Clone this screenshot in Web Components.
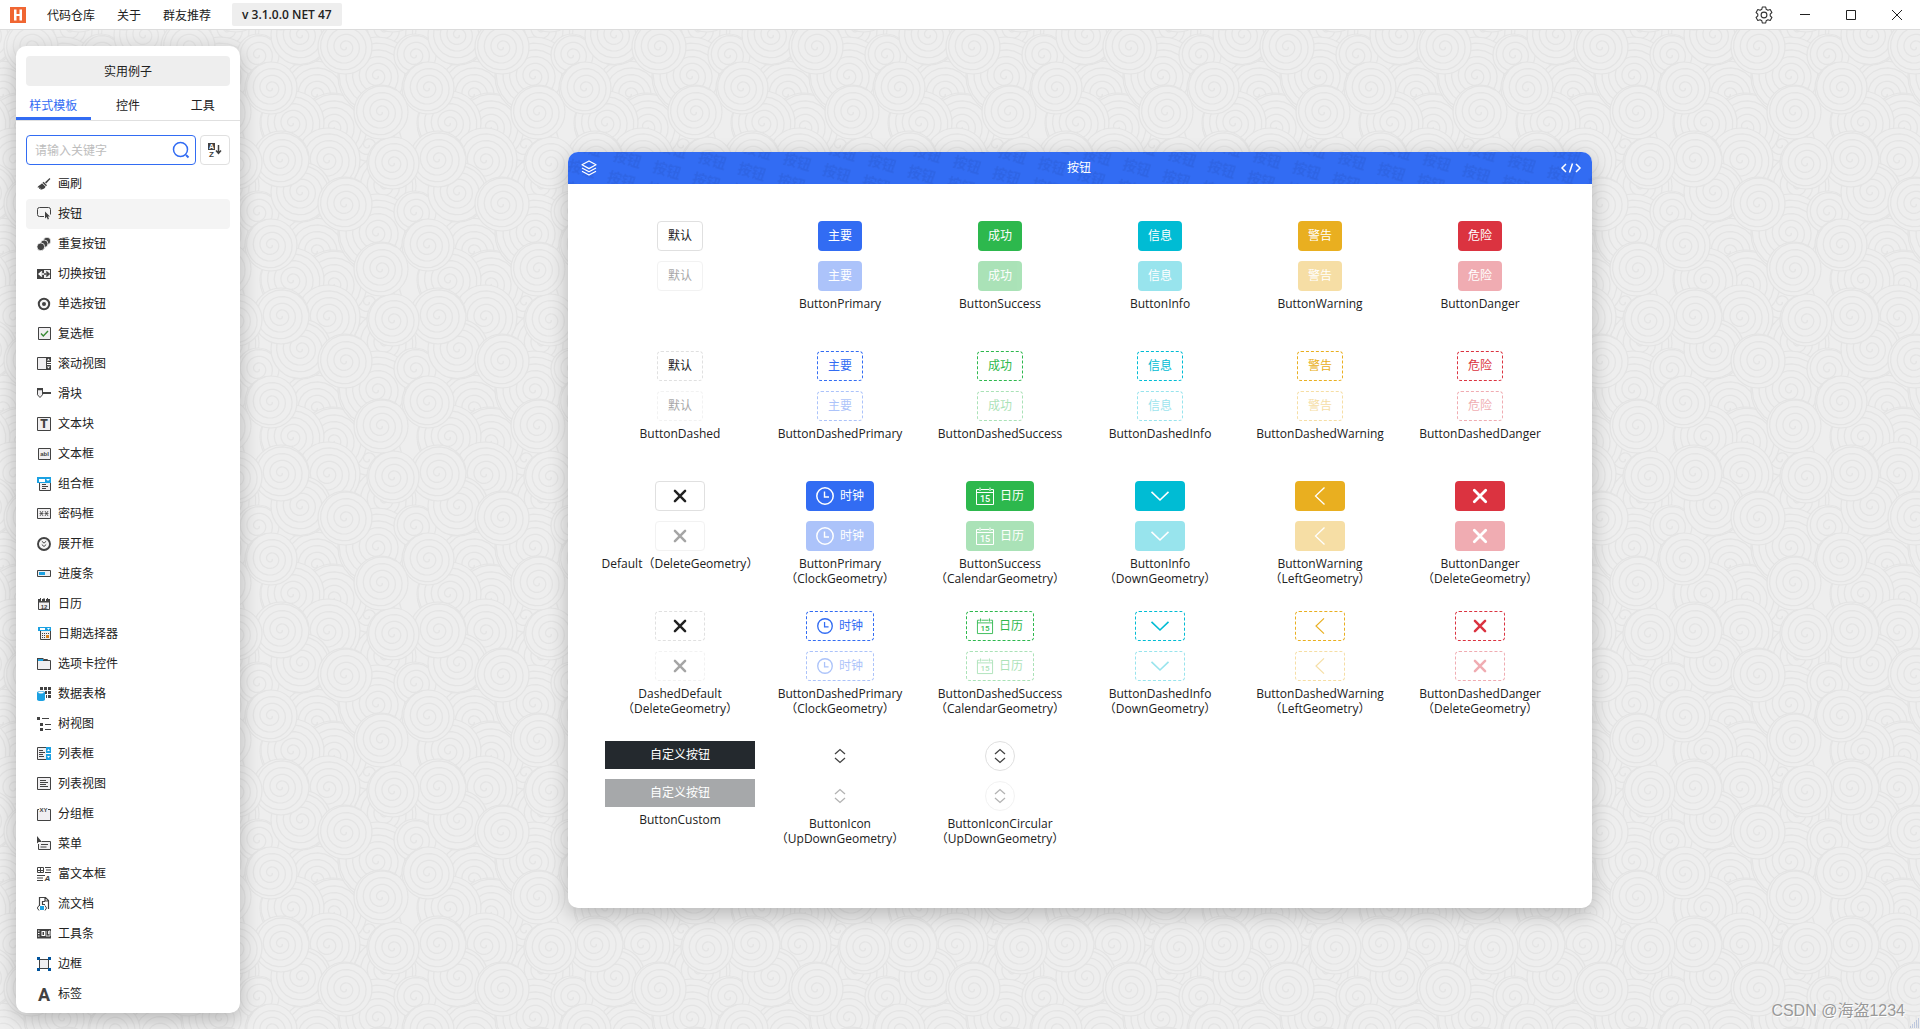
<!DOCTYPE html>
<html lang="zh-CN">
<head>
<meta charset="utf-8">
<title>按钮</title>
<style>
html, body { margin: 0; height: 100%; }
body {
  font: 12px/15px "Open Sans", "Noto Sans CJK SC", sans-serif;
  color: #212121;
  --primary: #326cf3; --success: #2db84d; --info: #00bcd4; --warning: #e9af20; --danger: #db3340;
  --line: #e0e0e0; --region: #eeeeee;
}
</style>
</head>
<body>
<app-shell></app-shell>
<script>
const ICONS = {
  brush: '<g fill="#424242"><path d="M13.6 2 9 6.300l1.200 1.200L14.400 3z"/><path d="M7.600 5.800 11 9.300 10 10.300 6.500 6.800z"/><path d="M6 7.200 9.600 10.800C8.500 13 6 13.800 4.300 13.800L5 12.400 3 13 3.400 11.500 1.600 11.600C1.600 9.800 4.500 9.300 6 7.200z"/></g>',
  button: '<path d="M8 10.500H3.500a2 2 0 0 1-2-2v-5a2 2 0 0 1 2-2h9a2 2 0 0 1 2 2v5" fill="none" stroke="#424242"/><path d="M9 5.500v7l1.700-1.400 1 2.400 1.300-.6-1-2.300h2z" fill="#424242"/>',
  repeat: '<g fill="#424242" stroke="#fff" stroke-width=".8"><circle cx="11" cy="5" r="3.800"/><circle cx="8.200" cy="7.800" r="3.800"/><circle cx="4.800" cy="10.800" r="3.900"/></g>',
  toggle: '<path d="M1 3h14v10H1z" fill="#424242"/><path d="M8 4h6v8H8z" fill="#f0f0f0"/><path d="M6 5.500 3.200 8 6 10.500M3.500 8H8" stroke="#fff" stroke-width="1.600" fill="none"/><path d="M10.300 5.500 13 8l-2.700 2.500M12.800 8H8" stroke="#424242" stroke-width="1.600" fill="none"/>',
  radio: '<circle cx="8" cy="8" r="5.200" fill="#f4f4f4" stroke="#424242" stroke-width="2"/><circle cx="8" cy="8" r="2" fill="#424242"/>',
  check: '<path d="M2.500 1.500h12v12h-12z" fill="#f0eff1" stroke="#424242"/><path d="M5 7.500 7.300 10 12 5" fill="none" stroke="#388a34" stroke-width="1.400"/>',
  scroll: '<path d="M1.500 1.500h13v12h-13z" fill="#f0eff1" stroke="#424242"/><path d="M10 1h5v13h-5z" fill="#424242"/><path d="M11 4.500h3L12.500 2.500zM11 10.500h3l-1.500 2zM11 6h4v1h-4zM11 8h4v1h-4z" fill="#fff"/>',
  slider: '<path d="M1.500 2.500h5v6.300L4 11.500 1.500 8.800z" fill="#f0eff1" stroke="#424242"/><path d="M1 2h6v2.200H1zM7 6h8v2H7z" fill="#424242"/>',
  textblock: '<path d="M1.500 1.500h13v13h-13z" fill="#f0eff1" stroke="#424242"/><text x="8" y="12" text-anchor="middle" font-family="Roboto" font-weight="900" font-size="12" fill="#424242">T</text>',
  textbox: '<path d="M2.500 2.500h12v11h-12z" fill="#f0eff1" stroke="#424242"/><text x="8.500" y="10" text-anchor="middle" font-family="Liberation Sans" font-weight="700" font-size="6" fill="#424242">abl</text>',
  combo: '<path d="M1 1h14v6H1z" fill="#1ba1e2"/><path d="M3 3h6v3H3zM10 3h4l-2 2z" fill="#fff"/><path d="M3.500 7v7.500h11V7" fill="#f0eff1" stroke="#424242"/><path d="M6 8.500h4M6 10.500h6M6 12.500h4" stroke="#424242"/>',
  password: '<path d="M1.500 2.500h13v10h-13z" fill="#f0eff1" stroke="#424242"/><path d="m4 5 3 5M7 5l-3 5M3.500 7.500h4M9 5l3 5M12 5 9 10M8.500 7.500h4" stroke="#424242" stroke-width=".8"/>',
  expander: '<circle cx="8" cy="8" r="6" fill="#f4f4f4" stroke="#424242" stroke-width="1.900"/><path d="M5.800 5.200 8 7.200l2.200-2M5.800 8.500 8 10.500l2.200-2" fill="none" stroke="#424242"/>',
  progress: '<path d="M1.500 4.500h13v6h-13z" fill="#f0eff1" stroke="#424242"/><path d="M3 6h6v3H3z" fill="#1ba1e2"/>',
  calendar: '<path d="M2.500 5.500h11v8h-11z" fill="#f0eff1" stroke="#424242"/><path d="M2 3h12v3.500H2zM4 2h1v2H4zM7.500 2h1v2h-1zM11 2h1v2h-1z" fill="#424242"/><path d="M5 3h1v2H5zM9 3h1v2H9z" fill="#fff"/><text x="8" y="12.500" text-anchor="middle" font-family="Liberation Sans" font-weight="700" font-size="6" fill="#424242">12</text>',
  datepicker: '<path d="M2 1h13v4H2z" fill="#1ba1e2"/><path d="M4 2h5v2H4zM11 2h3l-1.500 2z" fill="#fff"/><path d="M4.500 5v8.500h10V5" fill="#f0eff1" stroke="#424242"/><path d="M6 7.500h7M6 9.500h3M6 11.500h3" stroke="#424242" stroke-dasharray="1 1"/><path d="M10 9h3v3h-3z" fill="#d9811f"/>',
  tab: '<path d="M1.500 4.500h13v9h-13zM7.500 3.500h4v1" fill="#f0eff1" stroke="#424242"/><path d="M1 2h6.500v3H1z" fill="#424242"/><path d="M2 3h5v2H2z" fill="#1ba1e2"/>',
  grid: '<path d="M4 1h3v3H4zM8 1h3v3H8zM12 1h3v3h-3zM9 5h2v3H9zM12 5h3v3h-3zM10 9h1v3h-1zM12 9h3v3h-3z" fill="#424242"/><path d="M1 6.500c0-2 8-2 8 0v7c0 2-8 2-8 0z" fill="#1ba1e2"/><ellipse cx="5" cy="6.500" rx="2.800" ry="1" fill="#fff"/>',
  tree: '<path d="M1 1h3v3H1zM4 7h3v3H4zM4 12h3v3H4zM6 2h7v1H6zM9 8h6v1H9zM9 13h6v1H9z" fill="#424242"/>',
  listbox: '<path d="M1.500 1.500h13v12h-13z" fill="#f0eff1" stroke="#424242"/><path d="M3 4.500h4M3 6.500h6M3 8.500h4M3 10.500h5" stroke="#424242"/><path d="M10 1h5v13h-5z" fill="#1ba1e2"/><path d="M11 5h3l-1.500-2zM11 10h3l-1.500 2zM10 7h5v1h-5z" fill="#fff"/>',
  listview: '<path d="M1.500 1.500h13v12h-13z" fill="#f0eff1" stroke="#424242"/><path d="M4 4.500h6M4 6.500h8M4 8.500h6M4 10.500h8" stroke="#424242"/>',
  group: '<path d="M3 3.500H1.500v11h13v-11H12" fill="#f0eff1" stroke="#424242"/><text x="7.500" y="6" text-anchor="middle" font-family="Liberation Sans" font-weight="700" font-size="6" fill="#424242">XY</text>',
  menu: '<path d="M6 5.500h8.500v8h-12V8" fill="#f0eff1" stroke="#424242"/><path d="M1 0v7.500l1.800-1.600H6z" fill="#424242"/><path d="M5 8.500h7M4.500 11h6" stroke="#424242"/>',
  rich: '<path d="M1.500 1.500h6v5h-6zM4.500 2v4M2 4.500h5" fill="none" stroke="#424242"/><path d="M9 1.500h6M10 4h5M9 6.500h6M1 9.500h8M1 12h6M1 14.500h6" stroke="#424242"/><text x="8.500" y="15" font-family="Liberation Sans" font-weight="700" font-style="italic" font-size="8" fill="#424242">A</text>',
  flow: '<path d="M3.500 10V1.500h6l3 3V13M9 2v3h3M9 5.500H6.500v3H9" fill="none" stroke="#424242" stroke-width="1.200"/><path d="M3 9.500 1.300 12 3 14.500M9 9.500 10.500 12 9 14.500" fill="none" stroke="#424242"/><path d="M4 10h4v4H4z" fill="#1ba1e2"/>',
  toolbar: '<path d="M1 3h14v9.500H1z" fill="#424242"/><path d="M2 4.500h1.500v1H2zM2 7h1.500v1H2zM2 9.500h1.500v1H2zM5.500 5H9v5H5.500z" fill="#fff"/><path d="M6.500 6H8v3H6.500z" fill="#424242"/><path d="M10 5v5h4V5h-1v3h-.5V5" fill="none" stroke="#fff" stroke-width=".8"/>',
  border: '<path d="M3.500 3.500h9v9h-9z" fill="#f0eff1" stroke="#424242"/><path d="M1 1h3v3H1zM12 1h3v3h-3zM1 12h3v3H1zM12 12h3v3h-3z" fill="#00539c"/>',
  label: '<text x="8" y="15" text-anchor="middle" font-family="Roboto" font-weight="700" font-size="18" fill="#424242">A</text>',
  clock: '<circle cx="9" cy="9" r="8.200" fill="none" stroke="currentColor" stroke-width="1.500"/><path d="M8.500 4.500V10h4.500" fill="none" stroke="currentColor" stroke-width="1.400"/>',
  date: '<path d="M5 2.500h8M3 2.500H.5v15h17v-15H15M.5 5.500h17M4 .500v3.500M14 .500v3.500" fill="none" stroke="currentColor"/><text x="9" y="15" text-anchor="middle" font-family="Roboto" font-weight="500" font-size="9" fill="currentColor">15</text>',
  down: '<path d="M.500 4.800 9 13l8.500-8.200" fill="none" stroke="currentColor" stroke-width="1.600"/>',
  left: '<path d="M13.500.500 4.500 9l9 8.500" fill="none" stroke="currentColor" stroke-width="1.300"/>',
  close: '<path d="m3.300 3.300 11.400 11.400M14.700 3.300 3.300 14.700" stroke="currentColor" stroke-width="2.800" stroke-linecap="round"/>',
  updown: '<path d="M4 7 9 2.500 14 7M4 11l5 4.500L14 11" fill="none" stroke="currentColor" stroke-width="1.300"/>',
  search: '<circle cx="8.500" cy="8.500" r="7" fill="none" stroke="#326cf3" stroke-width="1.500"/><path d="m14 14 2.500 2.500" stroke="#326cf3" stroke-width="2"/>',
  sort: '<path d="M2 2h7v7H2z" fill="#424242"/><text x="5.500" y="8" text-anchor="middle" font-family="Liberation Sans" font-weight="700" font-size="7" fill="#fff">A</text><text x="5.500" y="16" text-anchor="middle" font-family="Liberation Sans" font-weight="700" font-size="8" fill="#424242">Z</text><path d="M12.500 4v8M10 9.500l2.500 2.800L15 9.500" fill="none" stroke="#424242" stroke-width="1.500"/>',
  layers: '<path d="M9 2 16 5.800 9 9.600 2 5.800zM2 9l7 3.800L16 9M2 12.200 9 16l7-3.800" fill="none" stroke="#fff" stroke-width="1.300" stroke-linejoin="round"/>',
  gear: '<path d="M7.300 1h3.400l.5 2.300 1.700 1 2.300-.8 1.700 3-1.700 1.600v1.800l1.700 1.600-1.700 3-2.300-.8-1.700 1-.5 2.300H7.300l-.5-2.300-1.700-1-2.300.8-1.700-3 1.700-1.600V8.100L1.100 6.500l1.700-3 2.300.8 1.700-1z" fill="none" stroke="#333" stroke-width="1.100" stroke-linejoin="round"/><circle cx="9" cy="9" r="2.900" fill="none" stroke="#333" stroke-width="1.100"/>',
  min: '<path d="M4 8.500h10" stroke="#212121"/>',
  max: '<path d="M4.500 4.500h9v9h-9z" fill="none" stroke="#212121"/>',
  exit: '<path d="m4 4 10 10M14 4 4 14" stroke="#212121"/>',
  logo: '<path d="M1 1h16v16H1z" fill="#f06632"/><path d="M5 3.500h2.500V8h3V3.500H13v11h-2.500V10h-3v4.500H5z" fill="#fff"/>'
};

class Base extends HTMLElement {
  connectedCallback() {
    if (this.shadowRoot) return;
    this.attachShadow({ mode: 'open' }).innerHTML = this.view();
  }
}
const RESET = '*{box-sizing:border-box}button,input{font:inherit;color:inherit;margin:0;cursor:pointer}a{color:inherit;text-decoration:none}';

customElements.define('ui-icon', class extends Base {
  view() {
    const box = this.getAttribute('box') || 18, size = this.getAttribute('size') || box;
    return `<style>:host{display:block;flex:none}svg{display:block;overflow:visible}</style>
      <svg aria-hidden="true" width="${size}" height="${size}" viewBox="0 0 ${box} ${box}">${ICONS[this.getAttribute('name')]}</svg>`;
  }
});

/* Wallpaper: one tile of overlapping spirals, repeated. */
customElements.define('swirl-backdrop', class extends Base {
  view() {
    const T = 157, GAP = 6.7;
    const discs = [[368,145,34],[473,94,36],[333,127,34],[449,123,32],[385,29,31],[377,76,39],[415,55,21],
      [328,160,32],[458,35,30],[438,159,28],[393,163,26],[428,88,26],[345,47,27],[381,112,27]];
    const swirl = (cx, cy, r) => {
      let d = '';
      for (let k = 1; k <= r; k += 0.3) {
        const a = (k - 1) / GAP * Math.PI * 2;
        d += (d ? 'L' : 'M') + (cx + k * Math.cos(a)).toFixed(1) + ' ' + (cy + k * Math.sin(a)).toFixed(1);
      }
      return `<circle cx="${cx}" cy="${cy}" r="${r}"/><path d="${d}"/>`;
    };
    let art = '';
    for (const [x, y, r] of discs)
      for (const dx of [-T, 0, T]) for (const dy of [-T, 0, T]) {
        const cx = x % T + dx, cy = y % T + dy;
        if (cx > -r && cx < T + r && cy > -r && cy < T + r) art += swirl(cx, cy, r);
      }
    return `<style>:host{display:block;background:#eee}svg{display:block;width:100%;height:100%}</style>
      <svg aria-hidden="true"><defs><pattern id="t" width="${T}" height="${T}" patternUnits="userSpaceOnUse">
      <g fill="#eeeeee" stroke="#e4e4e4" stroke-width="1.200">${art}</g></pattern></defs><rect width="100%" height="100%" fill="url(#t)"/></svg>`;
  }
});

customElements.define('ui-button', class extends Base {
  view() {
    const kind = this.getAttribute('kind') || 'default', icon = this.getAttribute('icon');
    const dashed = this.hasAttribute('dashed'), off = this.hasAttribute('off');
    const text = this.textContent.trim();
    const small = (dashed && icon !== 'down') || kind === 'default';
    return `<style>${RESET}
      :host{display:block}
      button{display:flex;align-items:center;justify-content:center;gap:6px;height:30px;padding:0 10px;border:0;border-radius:4px;background:var(--c);color:#fff;line-height:20px}
      .default{--c:var(--line);background:#fff;color:#212121;border:1px solid var(--line)}
      .primary{--c:var(--primary)}.success{--c:var(--success)}.info{--c:var(--info)}.warning{--c:var(--warning)}.danger{--c:var(--danger)}
      .dashed{background:#fff;border:1px dashed var(--c);color:var(--c)}
      .dashed.default{color:#212121}
      .bare{min-width:50px}
      .icon,.circle{width:30px;min-width:0;padding:0;border:0;background:none;color:#424242}
      .circle{border:1px solid var(--line);border-radius:50%}
      .custom{width:150px;height:28px;border-radius:0;background:#24292e}
      button:disabled{opacity:.4;cursor:default}
      </style><button type="button" class="${kind} ${dashed ? 'dashed' : ''} ${icon && !text ? 'bare' : ''}" ${off ? 'disabled' : ''} ${text ? '' : `aria-label="${icon}"`}>
      ${icon ? `<ui-icon name="${icon}" size="${small ? 16 : 18}"></ui-icon>` : ''}<slot></slot></button>`.replace('<slot></slot>', text ? '<slot></slot>' : '');
  }
});

/* A pair of buttons, enabled and disabled, above a caption. */
customElements.define('demo-cell', class extends Base {
  view() {
    const at = ['kind', 'icon'].filter(n => this.hasAttribute(n)).map(n => `${n}="${this.getAttribute(n)}"`).join(' ')
      + (this.hasAttribute('dashed') ? ' dashed' : '');
    const t = this.getAttribute('text') || '';
    return `<style>:host{display:flex;flex-direction:column;align-items:center;gap:10px;white-space:nowrap;text-align:center}
      p{margin:-5px 0 0}</style>
      <ui-button ${at}>${t}</ui-button><ui-button ${at} off>${t}</ui-button><p><slot></slot></p>`;
  }
});

customElements.define('demo-panel', class extends Base {
  view() {
    const kinds = [['default','默认','Default'],['primary','主要','Primary'],['success','成功','Success'],['info','信息','Info'],['warning','警告','Warning'],['danger','危险','Danger']];
    const geo = [['close','','Delete'],['clock','时钟','Clock'],['date','日历','Calendar'],['down','','Down'],['left','','Left'],['close','','Delete']];
    const cell = (a, label) => `<demo-cell ${a}>${label}</demo-cell>`;
    let c = '';
    kinds.forEach(([k, t, n], i) => c += cell(`kind="${k}" text="${t}"`, i ? 'Button' + n : ''));
    kinds.forEach(([k, t, n], i) => c += cell(`kind="${k}" text="${t}" dashed`, 'ButtonDashed' + (i ? n : '')));
    kinds.forEach(([k, , n], i) => c += cell(`kind="${k}" icon="${geo[i][0]}" text="${geo[i][1]}"`, (i ? `Button${n}<br>` : 'Default') + `（${geo[i][2]}Geometry）`));
    kinds.forEach(([k, , n], i) => c += cell(`kind="${k}" icon="${geo[i][0]}" text="${geo[i][1]}" dashed`, (i ? `ButtonDashed${n}` : 'DashedDefault') + `<br>（${geo[i][2]}Geometry）`));
    c += cell('kind="custom" text="自定义按钮"', 'ButtonCustom') + cell('kind="icon" icon="updown"', 'ButtonIcon<br>（UpDownGeometry）') + cell('kind="circle" icon="updown"', 'ButtonIconCircular<br>（UpDownGeometry）');
    return `<style>${RESET}
      :host{display:block;background:#fff;border-radius:10px;overflow:hidden;box-shadow:0 6px 20px rgba(0,0,0,.24)}
      header{display:grid;height:32px;background:var(--primary);color:#fff}
      header>*{grid-area:1/1}
      header svg{width:100%;height:32px}
      .bar{display:flex;align-items:center;justify-content:space-between;padding:0 10px 0 12px}
      h1{margin:0;font-size:12px;font-weight:400;line-height:20px}
      .bar button{display:flex;width:22px;padding:0;border:0;background:none}
      .grid{display:grid;grid-template-columns:repeat(6,1fr);grid-auto-rows:130px;padding:37px 32px}
      </style>
      <header><svg aria-hidden="true"><defs><pattern id="w" width="41" height="22" patternUnits="userSpaceOnUse" patternTransform="rotate(16)">
        <text x="4" y="17" font-family="Noto Sans CJK SC" font-weight="700" font-size="14" fill="#2e64e4">按钮</text></pattern></defs><rect width="100%" height="32" fill="url(#w)"/></svg>
        <div class="bar"><ui-icon name="layers"></ui-icon><h1>按钮</h1>
        <button type="button" aria-label="code"><svg width="22" height="18" viewBox="0 0 22 18" style="height:18px"><path d="M6 5 2 9l4 4M16 5l4 4-4 4M12.500 4.500l-3 9" fill="none" stroke="#fff" stroke-width="1.500"/></svg></button></div></header>
      <div class="grid">${c}</div>`;
  }
});

customElements.define('nav-item', class extends Base {
  view() {
    return `<style>${RESET}:host{display:block}
      a{display:flex;align-items:center;gap:6px;height:30px;padding:0 10px;border-radius:4px;line-height:20px}
      :host([current]) a{background:#f4f4f4}</style>
      <a href="#"><ui-icon name="${this.getAttribute('icon')}" box="16"></ui-icon><slot></slot></a>`;
  }
});

customElements.define('side-panel', class extends Base {
  view() {
    const items = 'brush 画刷,button 按钮,repeat 重复按钮,toggle 切换按钮,radio 单选按钮,check 复选框,scroll 滚动视图,slider 滑块,textblock 文本块,textbox 文本框,combo 组合框,password 密码框,expander 展开框,progress 进度条,calendar 日历,datepicker 日期选择器,tab 选项卡控件,grid 数据表格,tree 树视图,listbox 列表框,listview 列表视图,group 分组框,menu 菜单,rich 富文本框,flow 流文档,toolbar 工具条,border 边框,label 标签'
      .split(',').map(s => s.split(' '));
    return `<style>${RESET}
      :host{display:flex;flex-direction:column;background:#fff;border-radius:10px;overflow:hidden;box-shadow:0 6px 20px rgba(0,0,0,.24)}
      .demo{margin:10px 10px 0;height:30px;flex:none;border:0;border-radius:4px;background:var(--region)}
      .tabs{display:flex;flex:none;height:35px;border-bottom:1px solid var(--line)}
      .tabs button{flex:1;padding:8px 0 0;border:0;border-bottom:3px solid transparent;background:none;line-height:20px}
      .tabs button.on{color:var(--primary);border-color:var(--primary)}
      form{display:flex;gap:4px;margin:14px 10px 4px}
      label{flex:1;min-width:0;display:flex;align-items:center;height:30px;border:1px solid var(--primary);border-radius:4px;padding:0 5px 0 8px}
      input{flex:1;min-width:0;border:0;padding:0;outline:0;background:none;height:20px}
      input::placeholder{color:#bdbdbd}
      form button{display:flex;flex:none;align-items:center;justify-content:center;width:30px;height:30px;padding:0;border:1px solid var(--line);border-radius:4px;background:#fff}
      nav{flex:1;min-height:0;overflow:hidden;padding:0 10px}
      </style>
      <button type="button" class="demo">实用例子</button>
      <div class="tabs" role="tablist"><button role="tab" aria-selected="true" class="on">样式模板</button><button role="tab">控件</button><button role="tab">工具</button></div>
      <form><label><input type="text" placeholder="请输入关键字" aria-label="请输入关键字"><ui-icon name="search"></ui-icon></label>
      <button type="button" aria-label="排序"><ui-icon name="sort"></ui-icon></button></form>
      <nav>${items.map(([i, t]) => `<nav-item icon="${i}" ${t === '按钮' ? 'current' : ''}>${t}</nav-item>`).join('')}</nav>`;
  }
});

customElements.define('title-bar', class extends Base {
  view() {
    const win = ['gear', 'min', 'max', 'exit'].map(n => `<button type="button" aria-label="${n}"><ui-icon name="${n}"></ui-icon></button>`).join('');
    return `<style>${RESET}
      :host{box-sizing:border-box;display:flex;align-items:center;height:30px;background:#fff;border-bottom:1px solid #dcdcdc;padding-left:9px}
      nav{display:flex;padding-left:9px}
      nav a{padding:2px 11px 0;line-height:27px}
      .ver{height:23px;margin-left:10px;padding:0 10px;border:0;border-radius:2px;background:var(--region);font-weight:600}
      .win{display:flex;margin-left:auto}
      .win button{display:flex;align-items:center;justify-content:center;width:46px;height:29px;border:0;padding:0;background:none}
      .win button:first-child{width:36px}
      </style>
      <ui-icon name="logo"></ui-icon>
      <nav><a href="#">代码仓库</a><a href="#">关于</a><a href="#">群友推荐</a></nav>
      <button type="button" class="ver">v 3.1.0.0 NET 47</button>
      <div class="win">${win}</div>`;
  }
});

customElements.define('app-shell', class extends Base {
  view() {
    return `<style>
      :host{display:grid;grid-template-rows:auto minmax(0,1fr);height:100vh;overflow:hidden;position:relative}
      title-bar{grid-area:1/1}
      swirl-backdrop{grid-area:1/1/3/2;min-height:0}
      title-bar,main{z-index:1}
      main{grid-area:2/1;display:flex;min-height:0}
      side-panel{width:224px;margin:16px 0 16px 16px;flex:none}
      .stage{flex:1;display:flex;align-items:center;justify-content:center;min-width:0;padding-top:1px}
      demo-panel{width:100%;max-width:1024px}
      .mark{position:absolute;right:15px;bottom:6px;z-index:2;font:16px/24px "Liberation Sans","Noto Sans CJK SC",sans-serif;color:#999;text-shadow:1px 1px 0 #fff}
      .grip{position:absolute;right:0;bottom:0;z-index:2;display:block}
      </style>
      <swirl-backdrop></swirl-backdrop><title-bar></title-bar>
      <main><side-panel></side-panel><div class="stage"><demo-panel></demo-panel></div></main>
      <span class="mark">CSDN @海盗1234</span>
      <svg class="grip" width="12" height="12" aria-hidden="true"><path d="M10 2h1M8 4h1M10 4h1M6 6h1M8 6h1M10 6h1M4 8h1M6 8h1M8 8h1M10 8h1M2 10h1M4 10h1M6 10h1M8 10h1M10 10h1" stroke="#8fa3cf" stroke-width="1.200"/></svg>`;
  }
});
</script>
</body>
</html>
